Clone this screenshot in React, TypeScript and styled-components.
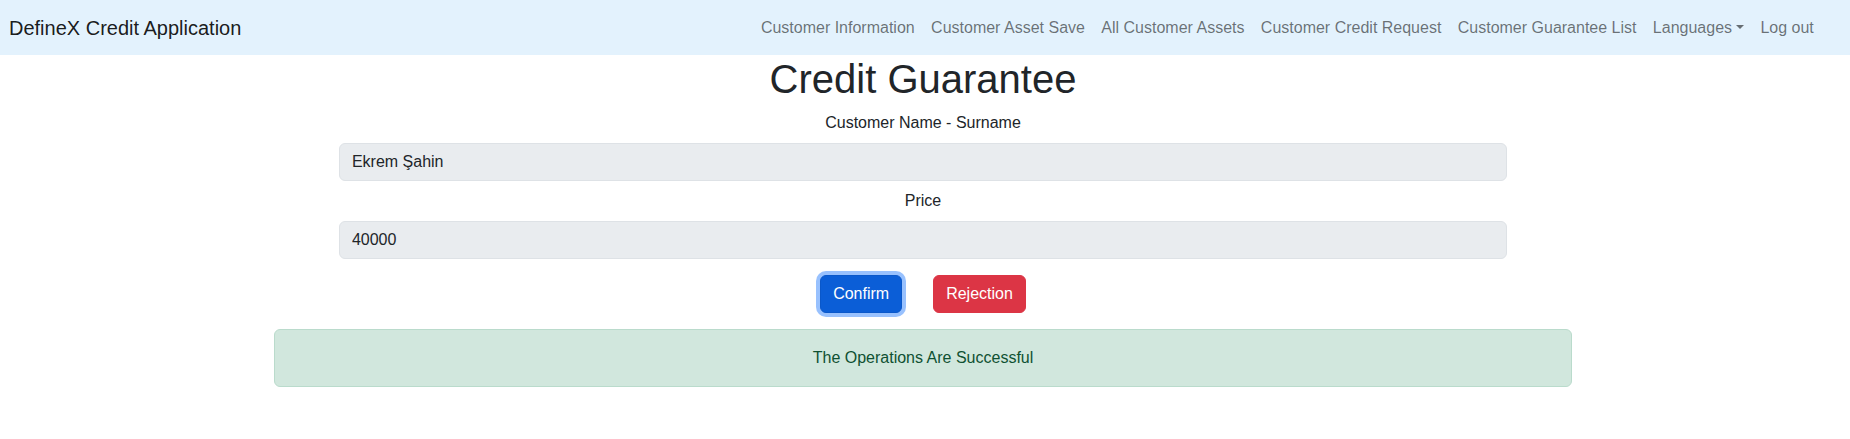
import React from "react";
import styled, { createGlobalStyle } from "styled-components";

const GlobalStyle = createGlobalStyle`
  * {
    box-sizing: border-box;
  }
  body {
    margin: 0;
    font-family: "Liberation Sans", Arial, sans-serif;
    font-size: 16px;
    line-height: 1.5;
    color: #212529;
    background-color: #fff;
  }
`;

const Navbar = styled.nav`
  display: flex;
  align-items: center;
  justify-content: space-between;
  height: 55px;
  padding: 0 28px 0 9px;
  background-color: #e3f2fd;
`;

const Brand = styled.a`
  font-size: 20px;
  line-height: 30px;
  color: rgba(0, 0, 0, 0.9);
  text-decoration: none;
`;

const NavList = styled.ul`
  display: flex;
  align-items: center;
  margin: 0;
  padding: 0;
  list-style: none;
`;

const NavLink = styled.a`
  display: block;
  padding: 8px 8.2px;
  color: rgba(0, 0, 0, 0.55);
  text-decoration: none;
  line-height: 24px;
`;

const Caret = styled.span`
  display: inline-block;
  margin-left: 4px;
  vertical-align: 4px;
  border-top: 4.8px solid;
  border-left: 4.8px solid transparent;
  border-right: 4.8px solid transparent;
`;

const Main = styled.main`
  display: flex;
  flex-direction: column;
  align-items: center;
  padding-right: 4px;
`;

const Title = styled.h1`
  margin: 0 0 8px;
  font-size: 40px;
  font-weight: 500;
  line-height: 1.2;
`;

const Container = styled.div`
  width: 1298px;
`;

const Form = styled.form`
  width: 90%;
  margin: 0 auto;
`;

const Label = styled.label<{ $first?: boolean }>`
  display: block;
  margin: ${(p) => (p.$first ? "0" : "8px")} 0 8px;
  text-align: center;
`;

const Input = styled.input`
  display: block;
  width: 100%;
  height: 38px;
  padding: 6px 12px;
  font: inherit;
  color: #212529;
  background-color: #e9ecef;
  border: 1px solid #dee2e6;
  border-radius: 6px;
  outline: none;
`;

const ButtonRow = styled.div`
  display: flex;
  justify-content: center;
  gap: 31px;
  margin: 16px 0;
`;

const Button = styled.button<{ $variant: "primary" | "danger"; $focused?: boolean }>`
  padding: 6px 12px;
  font: inherit;
  line-height: 24px;
  color: #fff;
  border-radius: 6px;
  cursor: pointer;
  border: 1px solid ${(p) => (p.$variant === "primary" ? "#0a58ca" : "#dc3545")};
  background-color: ${(p) => (p.$variant === "primary" ? "#0b5ed7" : "#dc3545")};
  box-shadow: ${(p) => (p.$focused ? "0 0 0 4px rgba(49, 132, 253, 0.5)" : "none")};
`;

const Alert = styled.div`
  padding: 16px;
  color: #0f5132;
  background-color: #d1e7dd;
  border: 1px solid #badbcc;
  border-radius: 6px;
  text-align: center;
`;

const links = [
  "Customer Information",
  "Customer Asset Save",
  "All Customer Assets",
  "Customer Credit Request",
  "Customer Guarantee List",
];

export default function App() {
  return (
    <>
      <GlobalStyle />
      <Navbar>
        <Brand href="#">DefineX Credit Application</Brand>
        <NavList>
          {links.map((l) => (
            <li key={l}>
              <NavLink href="#">{l}</NavLink>
            </li>
          ))}
          <li>
            <NavLink href="#">
              Languages
              <Caret />
            </NavLink>
          </li>
          <li>
            <NavLink href="#">Log out</NavLink>
          </li>
        </NavList>
      </Navbar>
      <Main>
        <Title>Credit Guarantee</Title>
        <Container>
          <Form onSubmit={(e) => e.preventDefault()}>
            <Label $first>Customer Name - Surname</Label>
            <Input readOnly value="Ekrem Şahin" />
            <Label>Price</Label>
            <Input readOnly value="40000" />
          </Form>
          <ButtonRow>
            <Button type="button" $variant="primary" $focused>
              Confirm
            </Button>
            <Button type="button" $variant="danger">
              Rejection
            </Button>
          </ButtonRow>
          <Alert>The Operations Are Successful</Alert>
        </Container>
      </Main>
    </>
  );
}
